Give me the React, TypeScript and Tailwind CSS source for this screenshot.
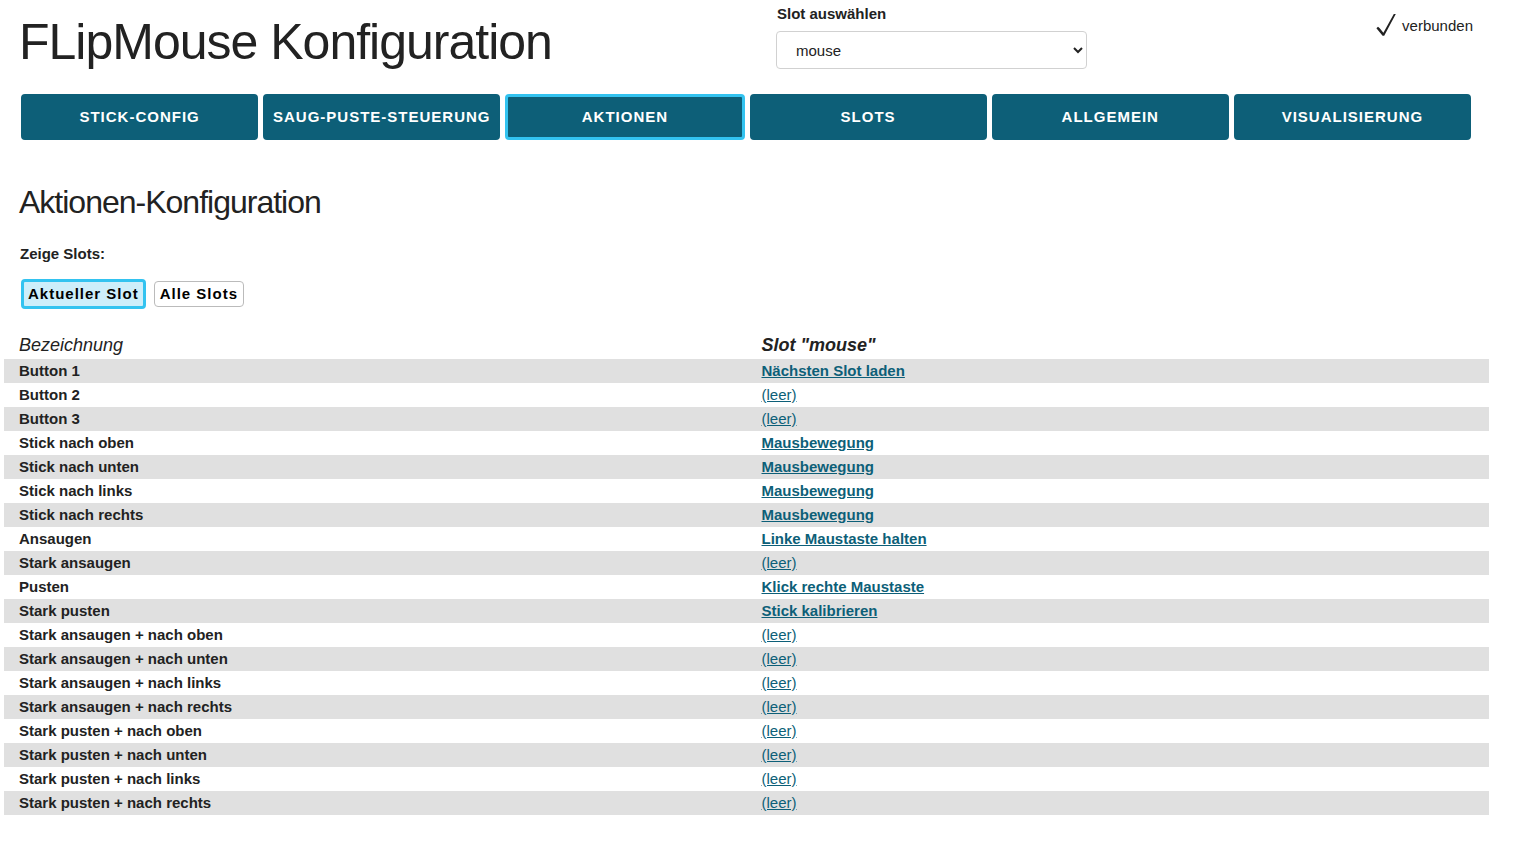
const tabs = ['Stick-Config', 'Saug-Puste-Steuerung', 'Aktionen', 'Slots', 'Allgemein', 'Visualisierung'];
const EMPTY = '(leer)';
const rows: [string, string][] = [
  ['Button 1', 'Nächsten Slot laden'],
  ['Button 2', EMPTY],
  ['Button 3', EMPTY],
  ['Stick nach oben', 'Mausbewegung'],
  ['Stick nach unten', 'Mausbewegung'],
  ['Stick nach links', 'Mausbewegung'],
  ['Stick nach rechts', 'Mausbewegung'],
  ['Ansaugen', 'Linke Maustaste halten'],
  ['Stark ansaugen', EMPTY],
  ['Pusten', 'Klick rechte Maustaste'],
  ['Stark pusten', 'Stick kalibrieren'],
  ['Stark ansaugen + nach oben', EMPTY],
  ['Stark ansaugen + nach unten', EMPTY],
  ['Stark ansaugen + nach links', EMPTY],
  ['Stark ansaugen + nach rechts', EMPTY],
  ['Stark pusten + nach oben', EMPTY],
  ['Stark pusten + nach unten', EMPTY],
  ['Stark pusten + nach links', EMPTY],
  ['Stark pusten + nach rechts', EMPTY],
];

export default function App() {
  return (
    <div className="bg-white pr-10 pb-7 pl-1 font-['Liberation_Sans',Arial,sans-serif] text-[15px] leading-6 text-[#222]">
      <header className="flex h-[94px] items-start pl-[15px]">
        <h1 className="w-[757px] shrink-0 pt-3 text-[50px] leading-[60px] tracking-[-1px]">FLipMouse Konfiguration</h1>
        <div className="w-[311px] pt-0.5">
          <label htmlFor="slot" className="block pl-px font-bold">Slot auswählen</label>
          <select id="slot" defaultValue="mouse" className="mt-[5px] block h-[38px] w-full rounded border border-[#d1d1d1] bg-white px-[15px]">
            <option>mouse</option>
          </select>
        </div>
        <div className="ml-auto flex items-center gap-1.5 pt-3.5 pr-4">
          <svg aria-hidden="true" className="h-6 w-5" viewBox="0 0 20 24" fill="#222">
            <path d="M.4 14.200 2 12.800 3.500 14 7.400 18.700 17.800 0H19.800L8.200 21.800H6.600Z" />
          </svg>
          <span>verbunden</span>
        </div>
      </header>
      <nav className="flex gap-[5px] pr-[18px] pl-[17px]">
        {tabs.map((t) => (
          <button
            key={t}
            type="button"
            className={`h-[46px] flex-1 rounded bg-[#0d5f78] text-[15px] font-bold tracking-[1px] whitespace-nowrap text-white uppercase ${t === 'Aktionen' ? 'border-3 border-[#33c3f0]' : 'border-2 border-[#0d5f78]'}`}
          >
            {t}
          </button>
        ))}
      </nav>
      <main>
        <div className="pl-[15px]">
          <h2 className="pt-10 text-[32px] leading-11 tracking-[-1px]">Aktionen-Konfiguration</h2>
          <p className="pt-[18px] pl-px font-bold">Zeige Slots:</p>
          <div className="flex items-center gap-2 pt-[13px] pl-0.5">
            <button type="button" className="h-[30px] rounded border-3 border-[#33c3f0] bg-[#cdeefa] px-1 font-bold tracking-[1px] text-black">Aktueller Slot</button>
            <button type="button" className="h-[26px] rounded border border-[#bbb] px-[5px] leading-5 font-bold tracking-[1px] text-black">Alle Slots</button>
          </div>
        </div>
        <table className="mt-5 w-full table-fixed border-collapse text-left">
          <thead>
            <tr className="h-[30px] text-[18px] italic">
              <th className="pt-0.5 pl-[15px] font-normal">Bezeichnung</th>
              <th className="pt-0.5 pl-[15px] font-bold">Slot "mouse"</th>
            </tr>
          </thead>
          <tbody>
            {rows.map(([name, action]) => (
              <tr key={name} className="odd:bg-[#e0e0e0]">
                <th scope="row" className="p-0 pl-[15px] font-bold">{name}</th>
                <td className="p-0 pl-[15px]">
                  <a href="#edit" className={`text-[#0d5f78] underline ${action === EMPTY ? '' : 'font-bold'}`}>{action}</a>
                </td>
              </tr>
            ))}
          </tbody>
        </table>
      </main>
    </div>
  );
}
